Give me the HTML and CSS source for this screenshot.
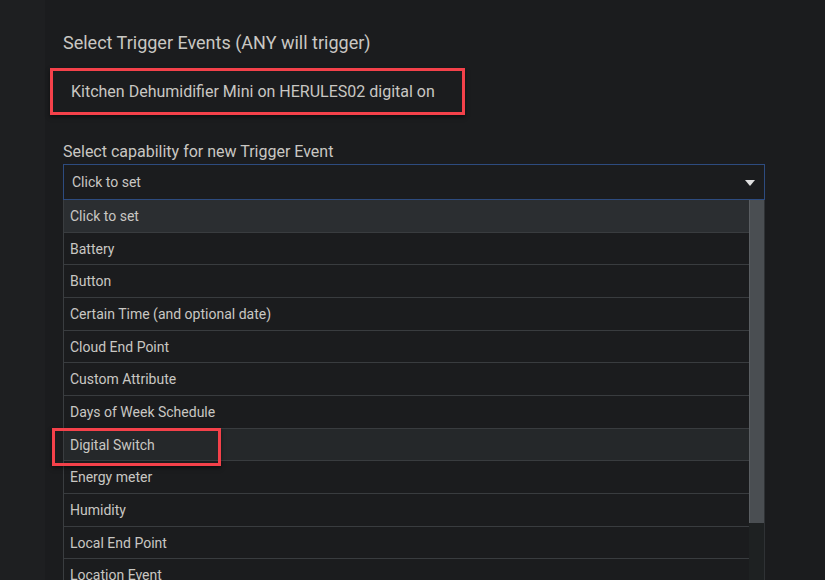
FILE: index.html
```html
<!DOCTYPE html>
<html lang="en">
<head>
    <meta charset="UTF-8">
    <meta name="viewport" content="width=device-width, initial-scale=1.0">
    <title>Trigger Events</title>
    <link rel="stylesheet" href="styles.css">
</head>
<body>
    <div class="side-strip"></div>
    <div class="panel">
        <h3 class="section-title">Select Trigger Events (ANY will trigger)</h3>
        <div class="event-item">Kitchen Dehumidifier Mini on HERULES02 digital on</div>

        <label class="field-label" for="capability">Select capability for new Trigger Event</label>
        <div class="select-box" id="capability">
            <span>Click to set</span>
            <span class="caret"></span>
        </div>

        <div class="dropdown">
            <ul class="options">
                <li class="active">Click to set</li>
                <li>Battery</li>
                <li>Button</li>
                <li>Certain Time (and optional date)</li>
                <li>Cloud End Point</li>
                <li>Custom Attribute</li>
                <li>Days of Week Schedule</li>
                <li class="hover">Digital Switch</li>
                <li>Energy meter</li>
                <li>Humidity</li>
                <li>Local End Point</li>
                <li>Location Event</li>
            </ul>
            <div class="scrollbar"><div class="thumb"></div></div>
            <div class="mark"></div>
        </div>
    </div>
</body>
</html>
```

FILE: styles.css
```css
body {
    margin: 0;
    height: 580px;
    overflow: hidden;
    display: flex;
    background: #1b1c1e;
    font-family: Roboto, 'Liberation Sans', sans-serif;
    color: #c9c7c3;
}
.side-strip {
    width: 45px;
    flex-shrink: 0;
    background: #1e1f21;
}
.panel {
    flex: 1;
    padding: 32px 60px 0 18px;
}
.section-title {
    margin: 0;
    font-size: 18px;
    font-weight: 400;
    line-height: 22px;
}
.event-item {
    margin: 14px 0 0 -13px;
    width: 391px;
    height: 41px;
    border: 3px solid #f4414a;
    box-shadow: 0 2px 4px rgba(0, 0, 0, 0.5);
    padding-left: 18px;
    font-size: 16px;
    line-height: 41px;
}
.field-label {
    display: block;
    margin-top: 26px;
    font-size: 16px;
    line-height: 22px;
}
.select-box {
    margin-top: 1px;
    height: 36px;
    box-sizing: border-box;
    border: 1px solid #2d4b7f;
    display: flex;
    align-items: center;
    justify-content: space-between;
    padding: 0 9px 0 8px;
    font-size: 14px;
}
.caret {
    width: 0;
    height: 0;
    border-left: 5px solid transparent;
    border-right: 5px solid transparent;
    border-top: 6px solid #e0e0e0;
    margin-top: 2px;
}
.dropdown {
    position: relative;
    display: flex;
}
.options {
    flex: 1;
    list-style: none;
    margin: 0;
    padding: 0;
    border-left: 1px solid #3a3d40;
}
.options li {
    height: 32.67px;
    box-sizing: border-box;
    border-bottom: 1px solid #393c3f;
    padding-left: 6px;
    font-size: 14px;
    line-height: 32px;
}
.options li.active {
    background: #2b2e31;
}
.options li.hover {
    background: #25282a;
}
.scrollbar {
    width: 15px;
    background: #1e2122;
    border-right: 1px solid #2f3235;
}
.thumb {
    height: 323px;
    background: #4a4e52;
    border-left: 1px solid #5a5e62;
}
.mark {
    position: absolute;
    left: -11px;
    top: 228px;
    width: 163px;
    height: 32px;
    border: 3px solid #f4414a;
    box-shadow: 0 2px 4px rgba(0, 0, 0, 0.5);
}
```
